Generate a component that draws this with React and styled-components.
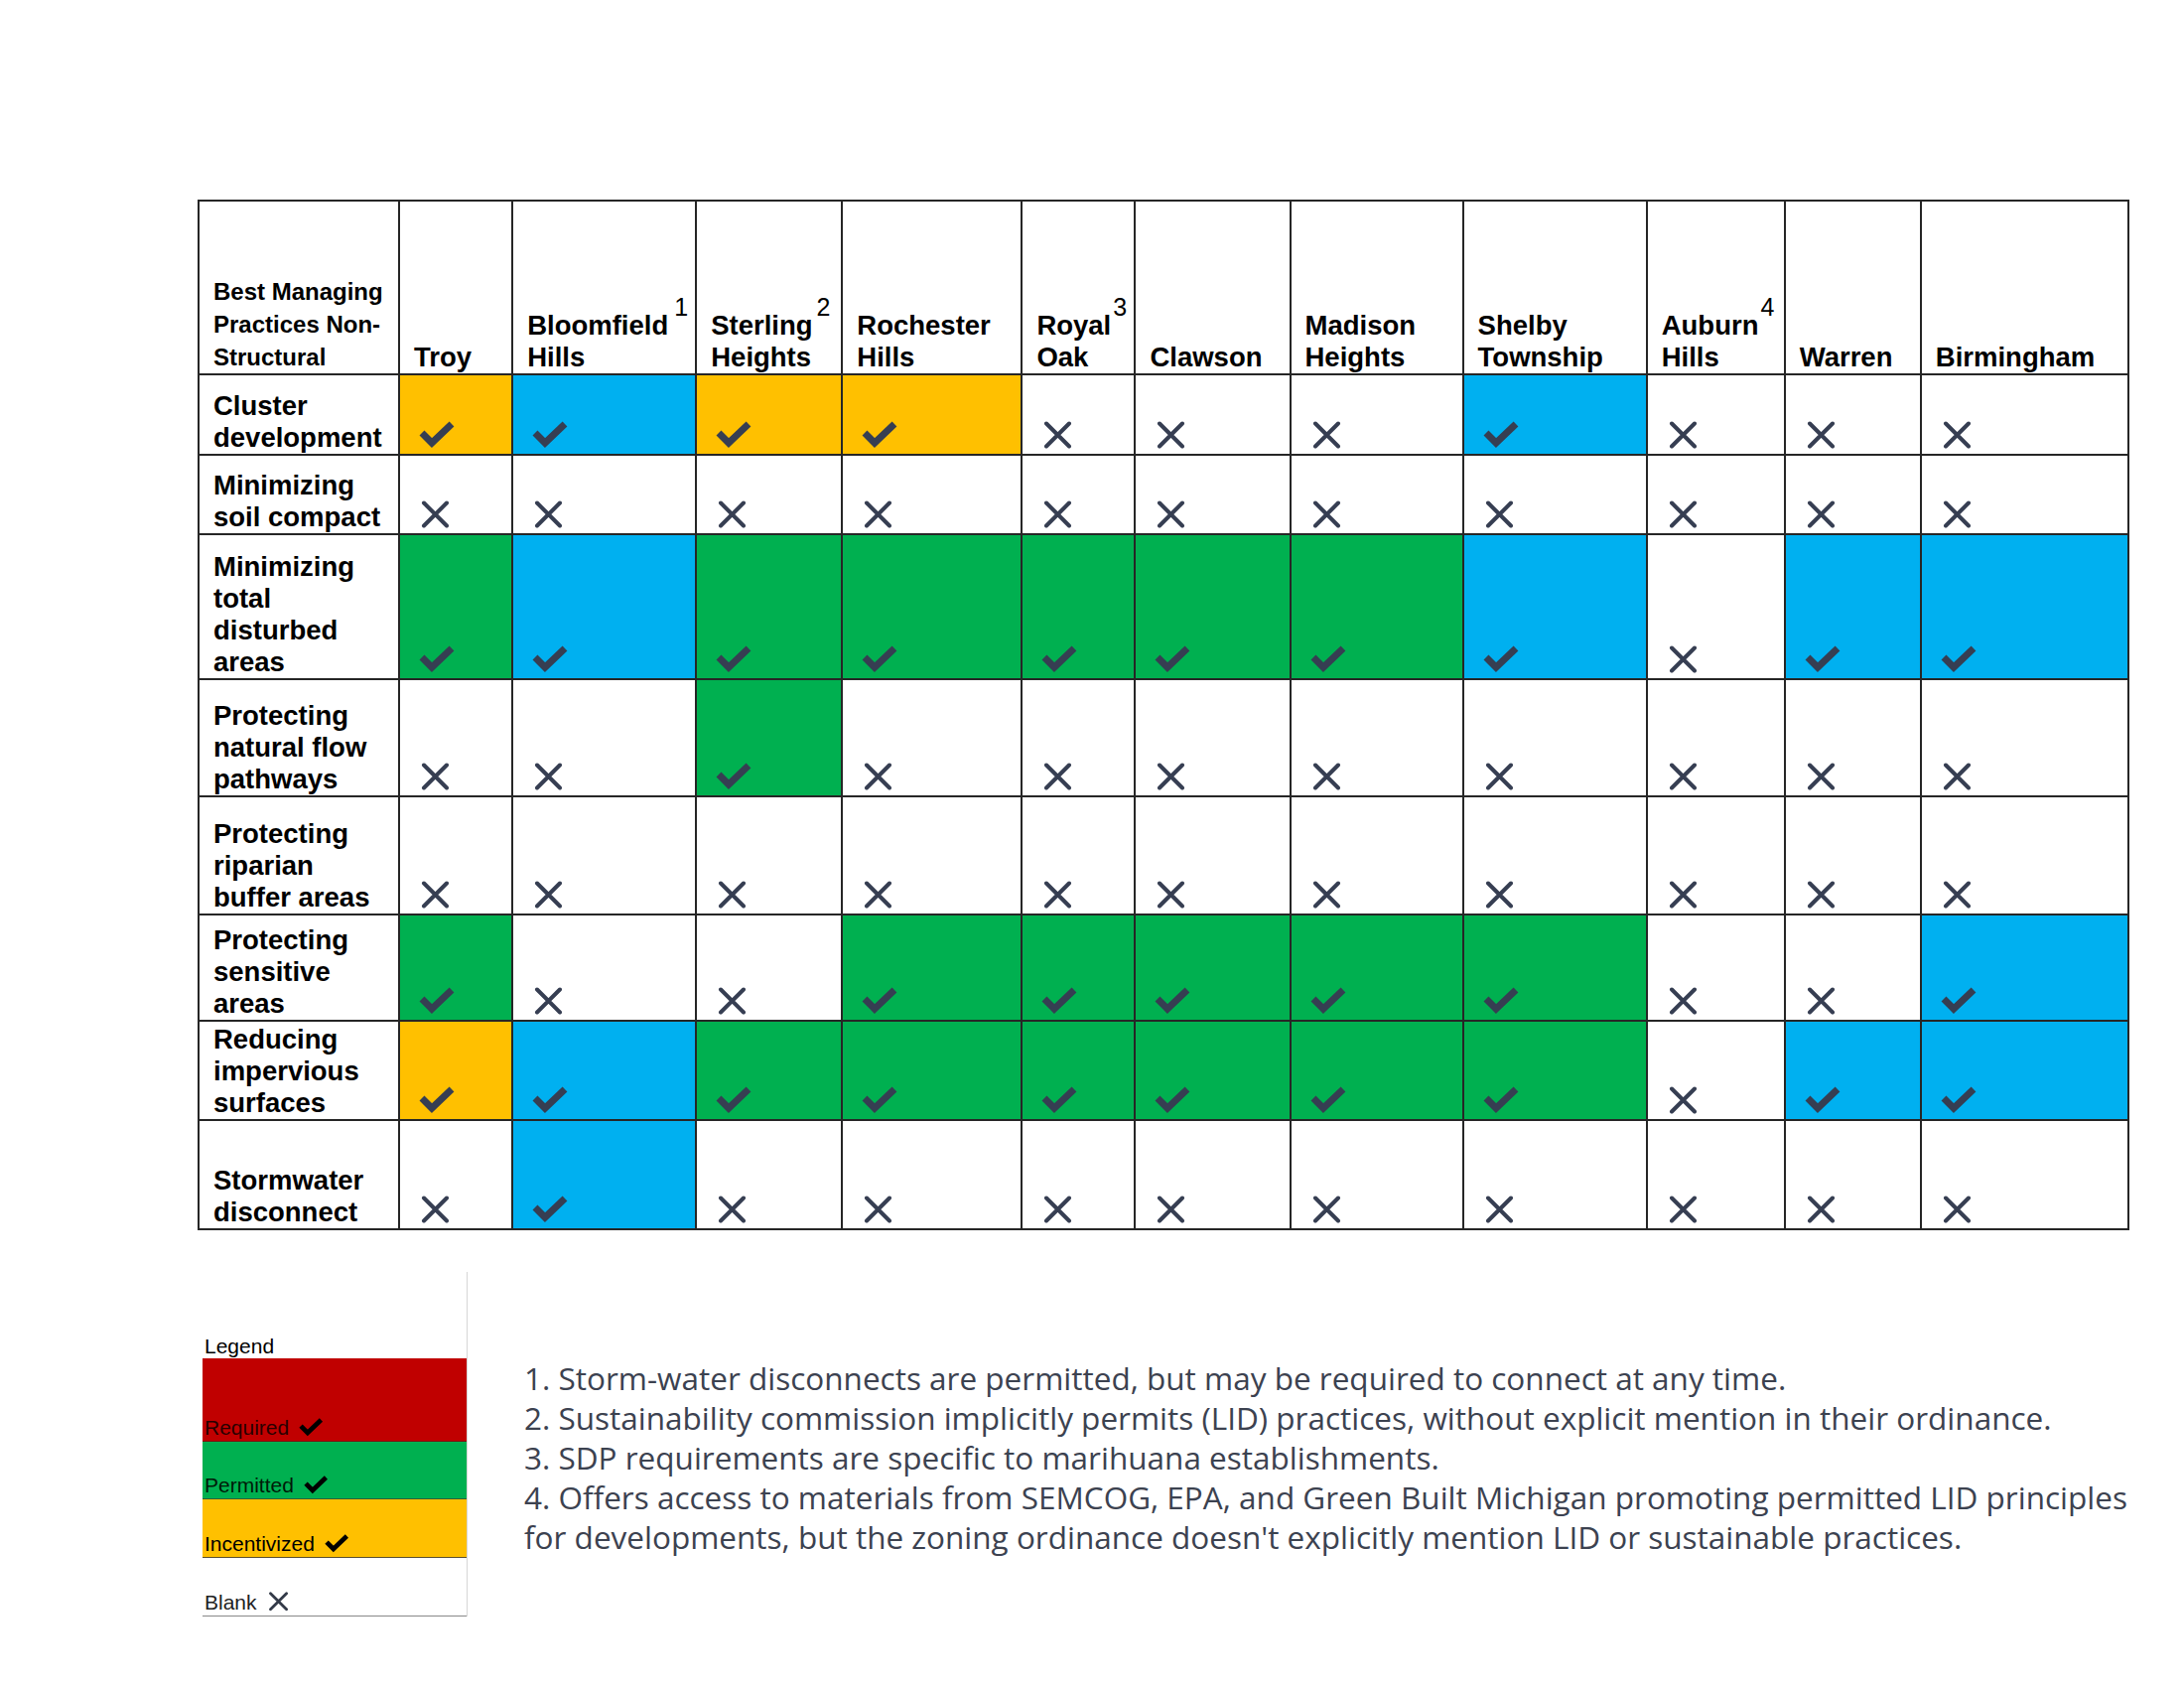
import React from "react";
import styled, { createGlobalStyle } from "styled-components";

const GlobalStyle = createGlobalStyle`
  html, body {
    margin: 0;
    padding: 0;
    background: #ffffff;
  }
  body {
    font-family: "Liberation Sans", Arial, sans-serif;
    color: #000;
  }
`;

const FILL = {
  Y: "#FFC000",
  B: "#00B0F0",
  G: "#00B050",
  x: "#ffffff",
};

const MARK = "#363e52";

const COLUMNS = [
  { w: 202 },
  { w: 114, lines: ["Troy"] },
  { w: 185, lines: ["Bloomfield", "Hills"], note: "1", gap: 6 },
  { w: 147, lines: ["Sterling", "Heights"], note: "2", gap: 4 },
  { w: 181, lines: ["Rochester", "Hills"] },
  { w: 114, lines: ["Royal", "Oak"], note: "3", gap: 2 },
  { w: 156, lines: ["Clawson"] },
  { w: 174, lines: ["Madison", "Heights"] },
  { w: 185, lines: ["Shelby", "Township"] },
  { w: 139, lines: ["Auburn", "Hills"], note: "4", gap: 2 },
  { w: 137, lines: ["Warren"] },
  { w: 209, lines: ["Birmingham"] },
];

const ROWS = [
  { h: 81, label: ["Cluster", "development"], cells: "Y B Y Y x x x B x x x" },
  { h: 80, label: ["Minimizing", "soil compact"], cells: "x x x x x x x x x x x" },
  { h: 146, label: ["Minimizing", "total", "disturbed", "areas"], cells: "G B G G G G G B x B B" },
  { h: 118, label: ["Protecting", "natural flow", "pathways"], cells: "x x G x x x x x x x x" },
  { h: 119, label: ["Protecting", "riparian", "buffer areas"], cells: "x x x x x x x x x x x" },
  { h: 107, label: ["Protecting", "sensitive", "areas"], cells: "G x x G G G G G x x B" },
  { h: 100, label: ["Reducing", "impervious", "surfaces"], cells: "Y B G G G G G G x B B" },
  { h: 110, label: ["Stormwater", "disconnect"], cells: "x B x x x x x x x x x" },
];

const NOTES = [
  ["1. Storm-water disconnects are permitted, but may be required to connect at any time."],
  ["2. Sustainability commission implicitly permits (LID) practices, without explicit mention in their ordinance."],
  ["3. SDP requirements are specific to marihuana establishments."],
  [
    "4. Offers access to materials from SEMCOG, EPA, and Green Built Michigan promoting permitted LID principles",
    "for developments, but the zoning ordinance doesn't explicitly mention LID or sustainable practices.",
  ],
];

const Page = styled.div`
  padding: 201px 0 0 199px;
  width: 2000px;
`;

const Grid = styled.table`
  border-collapse: collapse;
  table-layout: fixed;
  width: 1946px;
  border: 2px solid #262626;
`;

const Col = styled.col`
  width: ${(p) => p.$w}px;
`;

const Row = styled.tr`
  height: ${(p) => p.$h}px;
`;

const HeadCell = styled.th`
  border: 2px solid #262626;
  padding: 0 0 0 14px;
  vertical-align: bottom;
  text-align: left;
  font-weight: 700;
  font-size: ${(p) => (p.$small ? "24px" : "27.5px")};
  line-height: ${(p) => (p.$small ? "33px" : "32px")};
  white-space: nowrap;
  color: #000;
`;

const LabelCell = styled.th`
  border: 2px solid #262626;
  padding: 0 0 0 14px;
  vertical-align: bottom;
  text-align: left;
  font-weight: 700;
  font-size: 27.5px;
  line-height: 32px;
  white-space: nowrap;
  color: #000;
`;

const MarkCell = styled.td`
  border: 2px solid #262626;
  background: ${(p) => p.$fill};
  padding: 0 0 5px 19px;
  vertical-align: bottom;

  svg {
    display: block;
  }
`;

const Note = styled.span`
  font-weight: 400;
  font-size: 25px;
  line-height: 0;
  vertical-align: 19px;
  margin-left: ${(p) => p.$gap}px;
`;

const Bottom = styled.div`
  display: flex;
  align-items: flex-start;
  margin-top: 42px;
`;

const Legend = styled.div`
  margin-left: 5px;
  width: 266px;
  padding-top: 63px;
  border-right: 1px solid #d6d6d6;
  font-size: 21px;
  line-height: 24px;
  color: #000;
`;

const LegendTitle = styled.div`
  padding-left: 2px;
  height: 24px;
`;

const Band = styled.div`
  height: ${(p) => p.$h}px;
  box-sizing: border-box;
  background: ${(p) => p.$fill};
  border-bottom: 1px solid ${(p) => p.$line};
  display: flex;
  align-items: flex-end;
  gap: 10px;
  padding: 0 0 1px 2px;
  color: ${(p) => p.$text};

  svg {
    margin-bottom: 3px;
  }
`;

const Notes = styled.div`
  margin-left: 57px;
  padding-top: 87px;
  font-family: "Open Sans", "Noto Sans", sans-serif;
  font-size: 31.5px;
  line-height: 40px;
  color: #3c4250;
  white-space: nowrap;
`;

const NoteLine = styled.div``;

function Check({ size = 1, color = MARK }) {
  return (
    <svg width={36 * size} height={28 * size} viewBox="0 0 36 28">
      <path
        d="M3 12 L13 22 L33 3"
        fill="none"
        stroke={color}
        strokeWidth="7"
        strokeLinejoin="miter"
      />
    </svg>
  );
}

function Cross({ size = 1, color = MARK }) {
  return (
    <svg width={36 * size} height={28 * size} viewBox="0 0 36 28">
      <path
        d="M5 2.5 L28 25.5 M28 2.5 L5 25.5"
        fill="none"
        stroke={color}
        strokeWidth="4"
        strokeLinecap="round"
      />
    </svg>
  );
}

function HeaderLabel({ col }) {
  return col.lines.map((line, i) => (
    <React.Fragment key={i}>
      {i > 0 && <br />}
      {line}
      {i === 0 && col.note && <Note $gap={col.gap}>{col.note}</Note>}
    </React.Fragment>
  ));
}

function Lines({ lines }) {
  return lines.map((line, i) => (
    <React.Fragment key={i}>
      {i > 0 && <br />}
      {line}
    </React.Fragment>
  ));
}

export default function App() {
  return (
    <>
      <GlobalStyle />
      <Page>
        <Grid>
          <colgroup>
            {COLUMNS.map((c, i) => (
              <Col key={i} $w={c.w} />
            ))}
          </colgroup>
          <thead>
            <Row $h={175}>
              <HeadCell $small>
                Best Managing
                <br />
                Practices Non-
                <br />
                Structural
              </HeadCell>
              {COLUMNS.slice(1).map((c, i) => (
                <HeadCell key={i}>
                  <HeaderLabel col={c} />
                </HeadCell>
              ))}
            </Row>
          </thead>
          <tbody>
            {ROWS.map((r, ri) => (
              <Row key={ri} $h={r.h}>
                <LabelCell>
                  <Lines lines={r.label} />
                </LabelCell>
                {r.cells.split(" ").map((v, ci) => (
                  <MarkCell key={ci} $fill={FILL[v]}>
                    {v === "x" ? <Cross /> : <Check />}
                  </MarkCell>
                ))}
              </Row>
            ))}
          </tbody>
        </Grid>

        <Bottom>
          <Legend>
            <LegendTitle>Legend</LegendTitle>
            <Band $h={84} $fill="#C00000" $line="#7a1010" $text="#2a0000">
              Required <Check size={0.68} color="#000" />
            </Band>
            <Band $h={58} $fill="#00B050" $line="#2f5f3a" $text="#001a08">
              Permitted <Check size={0.68} color="#000" />
            </Band>
            <Band $h={59} $fill="#FFC000" $line="#5a5030" $text="#000">
              Incentivized <Check size={0.68} color="#000" />
            </Band>
            <Band $h={59} $fill="#ffffff" $line="#888888" $text="#222">
              Blank <Cross size={0.7} color="#333a48" />
            </Band>
          </Legend>
          <Notes>
            {NOTES.map((n, i) => (
              <NoteLine key={i}>
                <Lines lines={n} />
              </NoteLine>
            ))}
          </Notes>
        </Bottom>
      </Page>
    </>
  );
}
